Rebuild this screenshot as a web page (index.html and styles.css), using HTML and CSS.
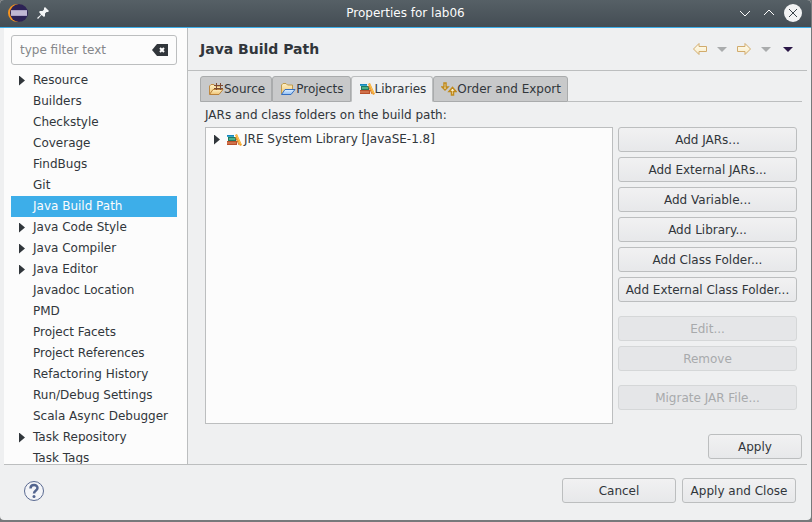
FILE: index.html
```html
<!DOCTYPE html>
<html lang="en">
<head>
<meta charset="utf-8">
<title>Properties for lab06</title>
<link rel="stylesheet" href="styles.css">
</head>
<body>
<svg class="defs" aria-hidden="true">
  <defs>
    <linearGradient id="cream" x1="0" y1="0" x2="0" y2="1"><stop offset="0" stop-color="#fffdf0"/><stop offset="1" stop-color="#f8ebc8"/></linearGradient>
    <linearGradient id="gold" x1="0" y1="0" x2="0" y2="1"><stop offset="0" stop-color="#fdf0c4"/><stop offset="1" stop-color="#efc272"/></linearGradient>
    <linearGradient id="blue" x1="0" y1="0" x2="0" y2="1"><stop offset="0" stop-color="#e2f1ff"/><stop offset="1" stop-color="#8dbdf4"/></linearGradient>
    <symbol id="books" viewBox="0 0 16 14">
      <path d="M1 2h7v1H1z" fill="#1787c0"/><path d="M1 3h7v1H1z" fill="#35a5cc"/>
      <path d="M2 4h8v4H2z" fill="#217a60"/><path d="M3 5h6v2H3z" fill="#4db088"/>
      <path d="M1 8h10v4H1z" fill="#b9502a"/><path d="M1 9h9v2H1z" fill="#d0714a"/>
      <path d="M9 2l2-1 5 11-2 1z" fill="#f2a22c"/><path d="M10.500 2l4 9" stroke="#ffc453" fill="none"/><path d="M9.500 4l3.500 8" stroke="#d97a22"/>
    </symbol>
  </defs>
</svg>
<div class="window">
  <header class="titlebar">
    <svg class="logo" viewBox="0 0 20 18" aria-hidden="true"><circle cx="9" cy="9" r="9" fill="#f7941e"/><circle cx="11" cy="9" r="9" fill="#2c2255"/><path d="M3 6h16v6H3z" fill="#aaa1c4"/><path d="M3 8h16M3 10h16" stroke="#d5cfe2"/></svg>
    <svg class="pin" viewBox="0 0 12 12" aria-hidden="true"><path d="M8 0l4 4-1 1H9.500L8 6.500V9L7 10 4.500 8 1 12 0 11 4 7.500 2 5l1-1h2.500L7 2.500V1z" fill="#f4f6f7"/></svg>
    <h1>Properties for lab06</h1>
    <button class="wbtn" aria-label="Minimize"><svg viewBox="0 0 18 18"><path d="M4 7l5 5 5-5" stroke="#fcfcfc" fill="none"/></svg></button>
    <button class="wbtn" aria-label="Maximize"><svg viewBox="0 0 18 18"><path d="M4 11l5-5 5 5" stroke="#fcfcfc" fill="none"/></svg></button>
    <button class="wbtn" aria-label="Close"><svg viewBox="0 0 18 18"><circle cx="9" cy="9" r="9" fill="#f2f3f4"/><path d="M5 5l8 8M13 5l-8 8" stroke="#3b444b" fill="none"/></svg></button>
  </header>
  <div class="content">
    <nav class="side" aria-label="Categories">
      <div class="filter">
        <input type="text" placeholder="type filter text" aria-label="Filter">
        <button class="clear" aria-label="Clear"><svg viewBox="0 0 16 12"><path d="M0 6l5-6h11v12H5z" fill="#31363b"/><path d="M8 4l4 4M12 4L8 8" stroke="#fff" stroke-width="2"/></svg></button>
      </div>
      <ul class="tree">
        <li class="parent">Resource</li><li>Builders</li><li>Checkstyle</li><li>Coverage</li><li>FindBugs</li><li>Git</li>
        <li class="selected">Java Build Path</li><li class="parent">Java Code Style</li><li class="parent">Java Compiler</li><li class="parent">Java Editor</li>
        <li>Javadoc Location</li><li>PMD</li><li>Project Facets</li><li>Project References</li><li>Refactoring History</li><li>Run/Debug Settings</li><li>Scala Async Debugger</li><li class="parent">Task Repository</li><li>Task Tags</li>
      </ul>
    </nav>
    <main class="page">
      <div class="head">
        <h2>Java Build Path</h2>
        <button class="tool" aria-label="Back"><svg width="14" height="12" viewBox="0 0 14 12"><path d="M.5 6L6 .5V3.500h7.500v5H6v3z" fill="url(#cream)" stroke="#d1ab6c"/></svg></button>
        <button class="tool" aria-label="Back history"><svg width="10" height="5" viewBox="0 0 10 5"><path d="M0 0h10L5 5z" fill="#aaacad"/></svg></button>
        <button class="tool" aria-label="Forward"><svg width="14" height="12" viewBox="0 0 14 12"><path d="M13.500 6L8 .5V3.500H.5v5H8v3z" fill="url(#cream)" stroke="#d1ab6c"/></svg></button>
        <button class="tool" aria-label="Forward history"><svg width="10" height="5" viewBox="0 0 10 5"><path d="M0 0h10L5 5z" fill="#aaacad"/></svg></button>
        <button class="tool" aria-label="Menu"><svg width="10" height="5" viewBox="0 0 10 5"><path d="M0 0h10L5 5z" fill="#2b1747"/></svg></button>
      </div>
      <div class="tabs" role="tablist">
        <button role="tab" class="tab"><svg viewBox="0 0 16 14"><path d="M1.500 12V4L3 2.500h3L7.500 4h5v4" fill="url(#gold)" stroke="#c08a42"/><path d="M1.500 12.500L5 7.500h10l-4 5z" fill="url(#gold)" stroke="#b9813a"/><path d="M6 3.500h9M6 6.500h9M8.500 1v7M12.500 1v7" stroke="#7d4a31" fill="none"/></svg>Source</button>
        <button role="tab" class="tab"><svg viewBox="0 0 16 14"><path d="M1.500 12V3L3 1.500h3L7.500 3h5v5" fill="url(#gold)" stroke="#c09a4a"/><path d="M1.500 12.500L5 7.500h10l-4 5z" fill="url(#blue)" stroke="#356fc0"/></svg>Projects</button>
        <button role="tab" class="tab active" aria-selected="true"><svg viewBox="0 0 16 14"><use href="#books"/></svg>Libraries</button>
        <button role="tab" class="tab"><svg viewBox="0 0 16 14"><path d="M3 1h2v4h2l-3 3-3-3h2z" fill="#fffbe4" stroke="#c08a1c" stroke-width="1.500"/><path d="M10.500 13h2V9.500h2.500l-3.500-4-3.500 4h2.500z" fill="#fffbe4" stroke="#c08a1c" stroke-width="1.500"/></svg>Order and Export</button>
      </div>
      <div class="panel">
        <p class="caption">JARs and class folders on the build path:</p>
        <div class="cols">
          <ul class="jars"><li><svg viewBox="0 0 16 14" aria-hidden="true"><use href="#books"/></svg>JRE System Library [JavaSE-1.8]</li></ul>
          <div class="actions">
            <button class="btn">Add JARs...</button><button class="btn">Add External JARs...</button><button class="btn">Add Variable...</button><button class="btn">Add Library...</button><button class="btn">Add Class Folder...</button><button class="btn">Add External Class Folder...</button>
            <button class="btn gap" disabled>Edit...</button><button class="btn" disabled>Remove</button><button class="btn gap" disabled>Migrate JAR File...</button>
          </div>
        </div>
      </div>
      <div class="apply"><button class="btn">Apply</button></div>
    </main>
  </div>
  <footer class="footer">
    <button class="help" aria-label="Help"><svg viewBox="0 0 20 20"><circle cx="10" cy="10" r="9.500" fill="#f4f5f8" stroke="#5a6a91"/><path d="M6.500 7.500C6.500 3 13.500 3 13.500 7c0 2.500-3.500 2.500-3.500 5.500" fill="none" stroke="#53658f" stroke-width="2.500"/><circle cx="10" cy="15.500" r="1.500" fill="#53658f"/></svg></button>
    <button class="btn">Cancel</button><button class="btn">Apply and Close</button>
  </footer>
</div>
</body>
</html>
```
FILE: styles.css
```css
* { box-sizing: border-box; }
body {
  margin: 0;
  height: 100vh;
  background: #77797b;
  color: #31363b;
  font: 12px/21px "DejaVu Sans", sans-serif;
}
button, input { font: inherit; color: inherit; margin: 0; }
button { border: 0; padding: 0; background: none; }
ul, p, h1, h2 { margin: 0; padding: 0; list-style: none; font: inherit; }
svg { display: block; flex: none; }
.defs { position: absolute; width: 0; height: 0; }

.window {
  display: flex;
  flex-direction: column;
  height: calc(100vh - 2px);
  margin-right: 1px;
  overflow: hidden;
  background: #eff0f1;
  border-radius: 4px;
}
.titlebar {
  display: flex;
  align-items: center;
  flex: none;
  height: 28px;
  padding: 0 9px 1px 8px;
  color: #fcfcfc;
  background: linear-gradient(#566066, #444d54);
  border-bottom: 1px solid #3daee9;
}
.titlebar h1 { flex: 1; padding-left: 32px; text-align: center; }
.logo { width: 20px; height: 18px; margin-right: 9px; }
.pin { width: 12px; height: 12px; }
.wbtn { width: 18px; height: 18px; margin-left: 6px; }

.content {
  display: flex;
  flex: 1;
  min-height: 0;
  margin: 0 4px;
  border-bottom: 1px solid #bcbebf;
}
.side {
  flex: none;
  width: 184px;
  padding: 7px 10px 0 7px;
  overflow: hidden;
  background: #fcfcfc;
  border-right: 1px solid #bcbebf;
}
.filter {
  display: flex;
  align-items: center;
  height: 30px;
  padding: 0 8px;
  border: 1px solid #bcbebf;
  border-radius: 3px;
  background: #fcfcfc;
}
.filter input { flex: 1; min-width: 0; padding: 0; border: 0; outline: 0; background: none; }
.filter input::placeholder { color: #85878a; opacity: 1; }
.clear svg { width: 16px; height: 12px; }
.tree { margin-top: 5px; white-space: nowrap; }
.tree li { padding-left: 22px; }
.tree .selected { background: #3daee9; color: #fcfcfc; }
.parent, .jars li { display: flex; align-items: center; }
.parent::before, .jars li::before {
  content: "";
  width: 6px;
  height: 10px;
  background: #31363b;
  clip-path: polygon(0 0, 100% 50%, 0 100%);
}
.tree .parent { padding-left: 8px; gap: 8px; }

.page { display: flex; flex-direction: column; flex: 1; min-width: 0; }
.head {
  display: flex;
  align-items: center;
  height: 43px;
  padding: 0 8px 0 12px;
  border-bottom: 1px solid #bcbebf;
}
.head h2 { flex: 1; font-size: 14px; font-weight: bold; }
.tool { display: flex; justify-content: center; width: 22px; }
.tabs {
  display: flex;
  height: 26px;
  margin: 5px 5px 0 12px;
}
.tabs::after { content: ""; flex: 1; border-bottom: 1px solid #bcbebf; }
.tab {
  display: flex;
  align-items: center;
  padding: 0 6px 0 7px;
  background: #c8c9ca;
  border: 1px solid #a9abac;
  border-radius: 3px 3px 0 0;
}
.tab.active { background: #eff0f1; border-color: #bcbebf; border-bottom-color: #eff0f1; }
.tab svg, .jars svg { width: 16px; height: 14px; }
.panel { display: flex; flex-direction: column; flex: 1; min-height: 0; padding: 3px 10px 0 17px; }
.cols { display: flex; flex: 1; gap: 5px; margin-top: 1px; }
.jars { flex: 1; padding: 1px 8px; background: #fcfcfc; border: 1px solid #bcbebf; }
.jars li { gap: 2px; }
.jars svg { margin-left: 4px; }
.actions { display: flex; flex-direction: column; gap: 5px; width: 179px; }
.btn {
  height: 25px;
  padding: 0 6px;
  line-height: 20px;
  background: linear-gradient(#f1f1f2, #e7e8ea);
  border: 1px solid #bcbebf;
  border-radius: 3px;
  white-space: nowrap;
}
.btn:disabled { color: #a8aaac; background: #e5e6e8; border-color: #d5d7d8; }
.btn.gap { margin-top: 9px; }
.apply { display: flex; justify-content: flex-end; padding: 10px 5px 5px; }
.apply .btn { width: 94px; }
.footer {
  display: flex;
  align-items: center;
  flex: none;
  gap: 6px;
  height: 55px;
  padding: 0 15px 4px 24px;
}
.footer .btn { width: 114px; }
.help { margin-right: auto; }
.help svg { width: 20px; height: 20px; }
```
